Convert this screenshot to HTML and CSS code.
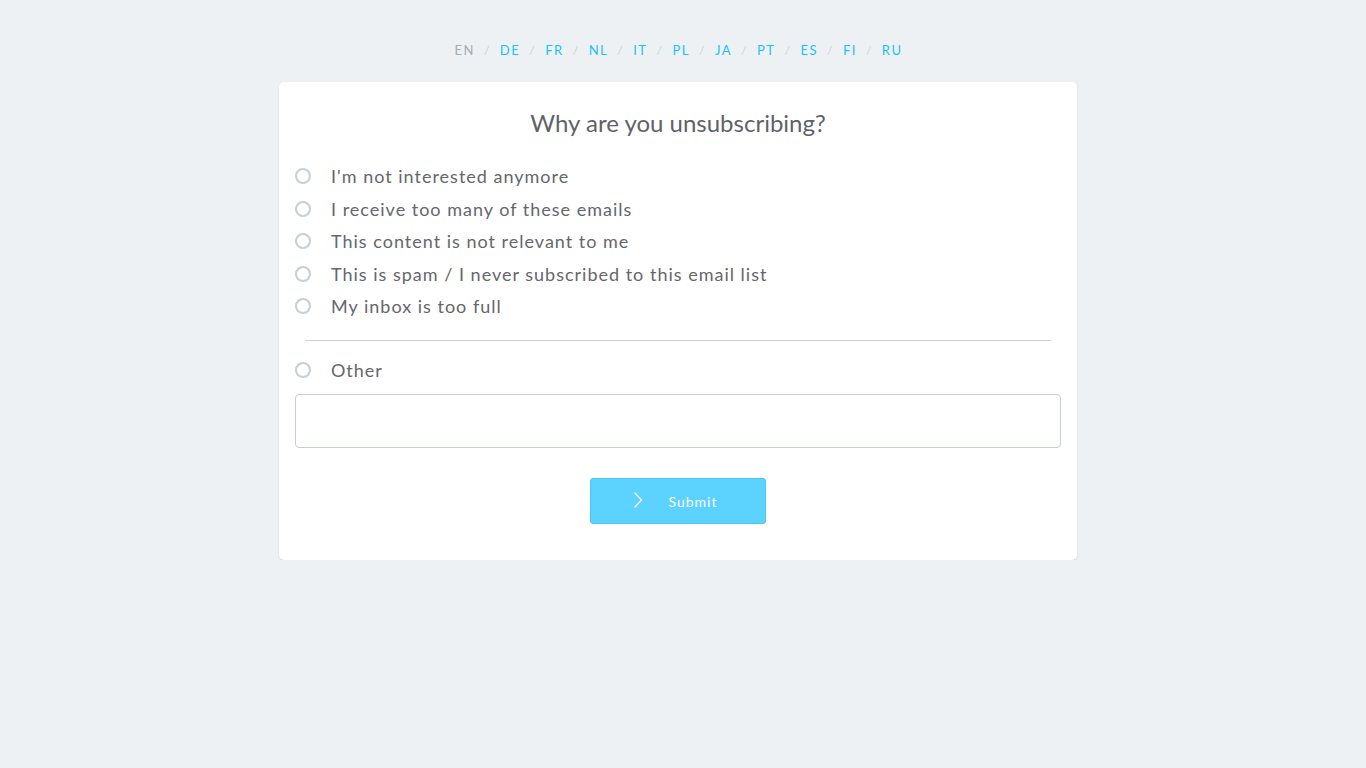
FILE: index.html
```html
<!DOCTYPE html>
<html>
<head>
<meta charset="utf-8">
<link rel="stylesheet" href="styles.css">
</head>
<body>
<nav class="langs">
  <span class="lang current">EN</span><span class="sep">/</span>
  <a class="lang">DE</a><span class="sep">/</span>
  <a class="lang">FR</a><span class="sep">/</span>
  <a class="lang">NL</a><span class="sep">/</span>
  <a class="lang">IT</a><span class="sep">/</span>
  <a class="lang">PL</a><span class="sep">/</span>
  <a class="lang">JA</a><span class="sep">/</span>
  <a class="lang">PT</a><span class="sep">/</span>
  <a class="lang">ES</a><span class="sep">/</span>
  <a class="lang">FI</a><span class="sep">/</span>
  <a class="lang">RU</a>
</nav>
<main class="card">
  <h1 class="title">Why are you unsubscribing?</h1>
  <ul class="options">
    <li class="option"><span class="radio"></span><span class="label">I'm not interested anymore</span></li>
    <li class="option"><span class="radio"></span><span class="label">I receive too many of these emails</span></li>
    <li class="option"><span class="radio"></span><span class="label">This content is not relevant to me</span></li>
    <li class="option"><span class="radio"></span><span class="label">This is spam / I never subscribed to this email list</span></li>
    <li class="option"><span class="radio"></span><span class="label">My inbox is too full</span></li>
  </ul>
  <hr class="divider">
  <ul class="options other">
    <li class="option"><span class="radio"></span><span class="label">Other</span></li>
  </ul>
  <div class="textbox"></div>
  <div class="actions">
    <button class="submit">
      <svg class="chev" width="10" height="18" viewBox="0 0 10 18"><path d="M1.5 1.5 L8.5 9 L1.5 16.5" fill="none" stroke="#ffffff" stroke-width="1.2"/></svg>
      <span>Submit</span>
    </button>
  </div>
</main>
</body>
</html>
```
FILE: styles.css
```css
html, body {
  margin: 0;
  padding: 0;
}
body {
  background: #edf1f4;
  font-family: "Lato", "Open Sans", sans-serif;
  color: #63666b;
  padding-right: 10px;
}
.langs {
  display: flex;
  justify-content: center;
  align-items: center;
  padding-top: 40px;
  height: 20px;
  font-size: 13px;
  letter-spacing: 1.5px;
  margin-bottom: 22px;
  padding-left: 1px;
}
.lang {
  color: #1ac2ff;
  font-weight: 400;
}
.lang.current {
  color: #a3adb7;
}
.sep {
  color: #cdd3d9;
  margin: 0 9px 0 9px;
  font-size: 12px;
}
.card {
  width: 766px;
  margin: 0 auto;
  background: #fff;
  border-radius: 5px;
  padding: 16px 16px 36px;
  box-shadow: 0 1px 2px rgba(0,0,0,0.12);
}
.title {
  margin: 10px 0 0;
  text-align: center;
  font-weight: 400;
  font-size: 24px;
  line-height: 30px;
  color: #5f6368;
}
.options {
  list-style: none;
  margin: 22px 0 0;
  padding: 0;
}
.options.other {
  margin-top: 13px;
}
.option {
  display: flex;
  align-items: center;
  height: 32.5px;
  font-size: 18px;
  letter-spacing: 1px;
}
.radio {
  width: 12px;
  height: 12px;
  border: 2px solid #c6ced7;
  border-radius: 50%;
  margin-right: 20px;
  flex: none;
}
.label {
  color: #64676c;
}
.divider {
  border: 0;
  border-top: 1px solid #c8d0d8;
  margin: 17px 10px 0;
}
.textbox {
  margin-top: 8px;
  height: 52px;
  border: 1px solid #c6ced6;
  border-radius: 4px;
}
.actions {
  display: flex;
  justify-content: center;
  margin-top: 30px;
}
.submit {
  width: 176px;
  height: 46px;
  background: #5bd2ff;
  border: 1px solid #4ec6f2;
  border-radius: 3px;
  color: #fff;
  font-family: "Lato", "Open Sans", sans-serif;
  font-size: 14px;
  letter-spacing: 1px;
  display: flex;
  align-items: center;
  padding: 0 0 0 42px;
  margin-right: 1px;
}
.chev {
  margin-right: 26px;
  margin-top: -2px;
}
```
